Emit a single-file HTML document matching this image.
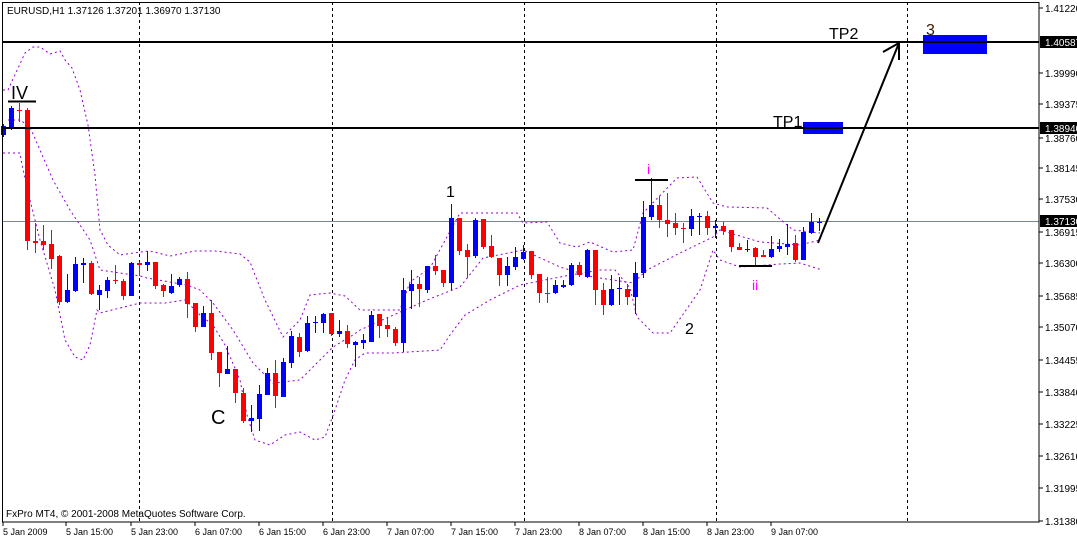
<!DOCTYPE html>
<html><head><meta charset="utf-8"><style>
html,body{margin:0;padding:0;background:#fff;width:1077px;height:540px;overflow:hidden}
svg{display:block;font-family:"Liberation Sans",sans-serif}
</style></head><body>
<svg id="s" width="1077" height="540" xmlns="http://www.w3.org/2000/svg">
<rect width="1077" height="540" fill="#fff"/>
<g id="grid" stroke="#000" stroke-width="1" stroke-dasharray="3,3">
<line x1="139.5" y1="2" x2="139.5" y2="522"/><line x1="332.5" y1="2" x2="332.5" y2="522"/>
<line x1="524.5" y1="2" x2="524.5" y2="522"/><line x1="716.5" y1="2" x2="716.5" y2="522"/>
<line x1="907.5" y1="2" x2="907.5" y2="522"/>
</g>
<line x1="2" y1="221.5" x2="1039" y2="221.5" stroke="#778899" stroke-width="1"/>
<g id="bands" fill="none" stroke="#9400d3" stroke-width="1" stroke-dasharray="2,3"></g>
<g id="c"></g>
<line x1="2" y1="42" x2="1039" y2="42" stroke="#000" stroke-width="2"/>
<line x1="2" y1="128" x2="1039" y2="128" stroke="#000" stroke-width="2"/>
<rect x="923" y="35" width="64" height="19" fill="#0000ff"/>
<line x1="923" y1="42" x2="987" y2="42" stroke="#000" stroke-width="2"/>
<rect x="803" y="122" width="40" height="12" fill="#0000ff"/>
<line x1="803" y1="128" x2="843" y2="128" stroke="#000" stroke-width="2"/>
<g stroke="#000" stroke-width="2" fill="none">
<line x1="818" y1="243" x2="899" y2="43"/>
<polyline points="883,52 899,43 899,60"/>
<line x1="8" y1="101.5" x2="36" y2="101.5"/>
<line x1="635" y1="180" x2="668" y2="180"/>
<line x1="739" y1="266" x2="772" y2="266"/>
</g>
<g font-size="16" fill="#000">
<text x="829" y="39">TP2</text>
<text x="773" y="127">TP1</text>
<text x="926" y="35" fill="#3a1a00">3</text>
<text x="11" y="99" font-size="18">IV</text>
<text x="446" y="197">1</text>
<text x="685" y="334">2</text>
<text x="211" y="424" font-size="20">C</text>
<text x="647" y="174" fill="#ff00ff" font-size="14">i</text>
<text x="752" y="290" fill="#ff00ff" font-size="14">ii</text>
</g>
<text x="7" y="14" font-size="10" fill="#000">EURUSD,H1  1.37126 1.37201 1.36970 1.37130</text>
<text x="6" y="517" font-size="10" fill="#000">FxPro MT4, © 2001-2008 MetaQuotes Software Corp.</text>
<rect x="2.5" y="2.5" width="1036.5" height="519.5" fill="none" stroke="#000" stroke-width="1"/>
<g id="ax" font-size="10" fill="#000"></g>
</svg>
<script>
var NS="http://www.w3.org/2000/svg";
function el(p,t,a,txt){var e=document.createElementNS(NS,t);for(var k in a)e.setAttribute(k,a[k]);if(txt!==undefined)e.textContent=txt;p.appendChild(e);return e;}
var D=[
[126,135,124,137,'b'],[108,129,106,130,'b'],[110,111,103,122,'r'],[110,241,108,250,'r'],
[241,243,223,253,'r'],[241,245,225,250,'r'],[244,259,230,269,'r'],[256,302,255,305,'r'],
[290,302,274,303,'b'],[264,291,257,292,'b'],[263,265,258,283,'b'],[263,294,261,295,'r'],
[290,295,285,310,'b'],[280,291,277,298,'b'],[280,281,265,284,'r'],[281,296,279,300,'r'],
[263,296,262,296,'b'],[263,265,262,276,'r'],[262,265,251,271,'b'],[262,286,262,289,'r'],
[285,291,284,297,'r'],[286,293,274,294,'b'],[279,285,277,287,'b'],[279,304,272,318,'r'],
[303,327,303,332,'r'],[313,327,306,327,'b'],[313,353,300,360,'r'],[352,373,352,387,'r'],
[369,374,346,374,'b'],[369,393,369,403,'r'],[393,421,388,423,'r'],[418,421,405,432,'b'],
[394,419,385,431,'b'],[373,395,368,395,'b'],[373,396,360,408,'r'],[362,397,358,397,'b'],
[336,363,331,368,'b'],[337,352,333,357,'r'],[323,351,316,352,'b'],[322,323,316,333,'b'],
[314,323,313,333,'b'],[313,334,313,336,'r'],[331,334,320,337,'b'],[331,344,325,348,'r'],
[342,345,341,367,'b'],
[340,343,334,349,'b'],[315,342,311,342,'b'],[314,326,314,338,'r'],[325,329,317,337,'r'],
[329,343,327,346,'r'],[290,343,278,352,'b'],[284,291,270,309,'b'],[284,289,277,307,'r'],
[266,290,266,293,'b'],[266,271,255,275,'r'],[270,283,270,287,'r'],[218,283,204,290,'b'],
[218,251,218,255,'r'],[250,257,244,278,'r'],[220,256,218,258,'b'],[219,247,219,249,'r'],
[246,257,235,258,'r'],[258,275,258,286,'r'],[266,275,257,286,'b'],[257,267,247,270,'b'],
[252,259,245,260,'b'],[251,275,251,279,'r'],[274,293,274,303,'r'],[293,294,277,303,'r'],
[285,293,280,294,'b'],[285,287,280,288,'b'],[265,285,263,286,'b'],[265,275,262,277,'r'],
[250,277,249,278,'b'],[250,290,250,305,'r'],[290,305,283,315,'r'],[289,305,275,306,'b'],
[288,289,277,305,'b'],[289,297,284,305,'r'],[273,297,262,314,'b'],[217,273,201,278,'b'],
[205,217,178,220,'b'],[205,220,196,228,'r'],[220,224,193,237,'r'],[223,228,213,235,'r'],
[228,229,223,243,'r'],[216,229,209,236,'b'],[216,217,213,235,'b'],[216,228,211,235,'r'],
[226,228,220,238,'b'],[226,231,222,235,'r'],[230,247,230,252,'r'],[247,250,243,250,'r'],
[249,250,240,252,'b'],[248,257,247,265,'r'],[255,257,250,257,'r'],[249,257,236,258,'b'],
[246,249,239,252,'b'],[244,247,224,255,'b'],[243,260,235,262,'r'],[232,260,227,260,'b'],
[222,233,213,234,'b'],[222,223,218,231,'b']
];
var g=document.getElementById('c');
D.forEach(function(d,k){var x=3+8*k,col=d[4]=='r'?'#ff0000':'#0000ff';
el(g,'rect',{x:x,y:d[2],width:1,height:Math.max(1,d[3]-d[2]),fill:col});
el(g,'rect',{x:x-2,y:d[0],width:5,height:Math.max(1,d[1]-d[0]),fill:col});});
var B=[
"3,90 8,90 25,53 33,47 40,47 50,54 60,51 65,60 72,68 80,90 88,125 95,175 100,230 108,245 120,255 140,252 150,251 170,256 195,251 215,251 240,254 250,262 265,300 283,337 300,320 310,295 330,293 345,296 360,310 400,310 410,282 430,268 460,213 517,213 523,223 547,222 560,243 577,247 590,242 613,252 633,250 643,213 677,178 697,177 713,203 727,207 767,208 793,230 820,233",
"8,120 20,120 30,127 53,180 70,210 90,240 100,270 140,276 147,278 187,285 200,290 213,303 233,330 253,363 273,383 300,380 320,360 333,347 353,335 360,330 427,300 460,287 483,258 523,250 560,267 593,277 633,283 647,270 680,253 713,237 720,230 760,242 800,245 820,240",
"3,153 20,153 22,165 30,200 40,240 55,290 65,340 75,357 83,360 90,345 97,310 100,313 140,303 165,303 185,300 200,315 213,325 225,345 240,380 247,415 255,440 270,445 285,435 300,432 315,440 325,437 335,410 345,380 355,360 365,353 393,353 440,350 450,335 465,315 490,300 520,285 545,280 565,276 600,270 615,270 630,288 637,317 653,333 670,333 700,290 713,250 720,260 740,267 780,264 800,263 822,270"];
var bg=document.getElementById('bands');B.forEach(function(p){el(bg,'polyline',{points:p});});
var ax=document.getElementById('ax');
var L=[["1.41220",8],["1.39990",73],["1.39375",104],["1.38760",138],["1.38145",168],["1.37530",199],["1.36915",232],["1.36300",263],["1.35685",296],["1.35070",327],["1.34455",360],["1.33840",392],["1.33225",424],["1.32610",456],["1.31995",488],["1.31380",521]];
L.forEach(function(l){el(ax,'line',{x1:1039,y1:l[1],x2:1043,y2:l[1],stroke:'#000'});el(ax,'text',{x:1045,y:l[1]+4},l[0]);});
[["1.40587",42],["1.38940",128],["1.37130",221]].forEach(function(l){el(ax,'rect',{x:1040,y:l[1]-6,width:37,height:12,fill:'#000'});el(ax,'text',{x:1045,y:l[1]+4,fill:'#fff'},l[0]);});
var T=[["5 Jan 2009",2],["5 Jan 15:00",65],["5 Jan 23:00",130],["6 Jan 07:00",194],["6 Jan 15:00",258],["6 Jan 23:00",322],["7 Jan 07:00",386],["7 Jan 15:00",450],["7 Jan 23:00",514],["8 Jan 07:00",578],["8 Jan 15:00",642],["8 Jan 23:00",706],["9 Jan 07:00",770]];
T.forEach(function(t){el(ax,'line',{x1:t[1]+1,y1:522,x2:t[1]+1,y2:526,stroke:'#000'});el(ax,'text',{x:t[1]+1,y:535,'font-size':9},t[0]);});
</script>
</body></html>
